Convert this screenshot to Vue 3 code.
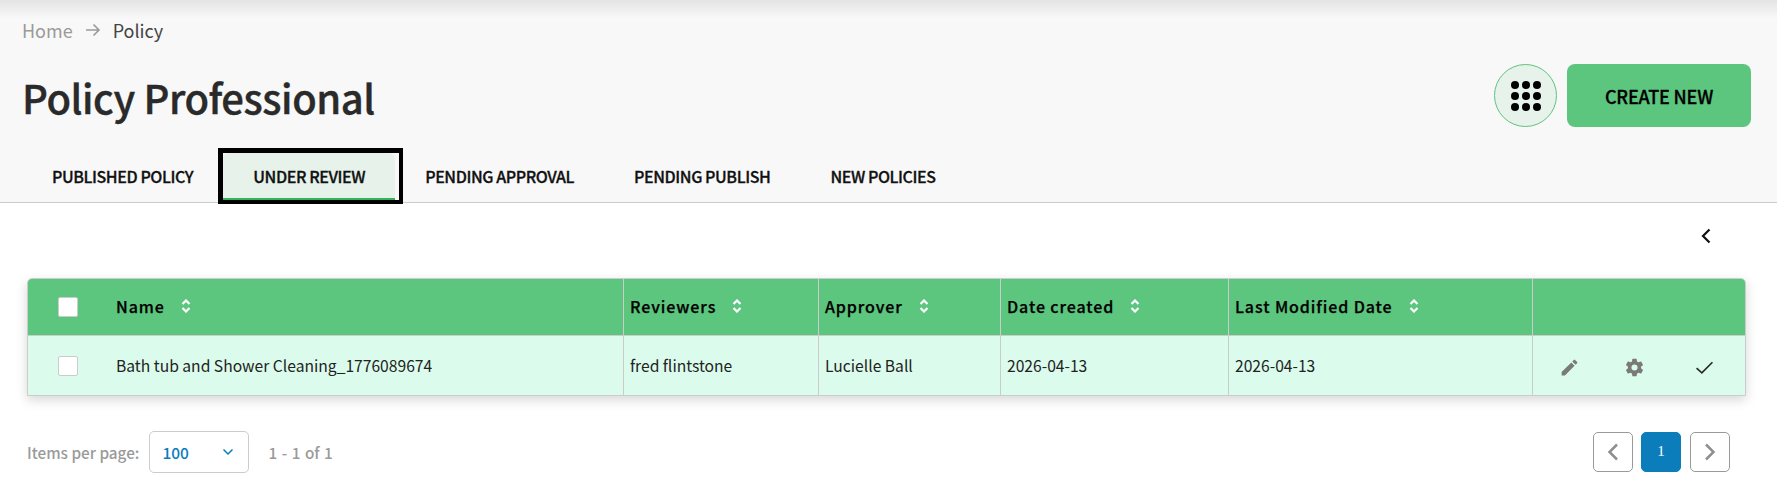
<template>
  <div class="page">
    <header class="head">
      <nav class="crumbs">
        <span class="home">Home</span>
        <svg class="arrow" width="18" height="14" viewBox="0 0 18 14"><path d="M2 7h13M9.500 1.500 15 7l-5.500 5.500" fill="none" stroke="#9a9a9a" stroke-width="1.600"/></svg>
        <span class="cur">Policy</span>
      </nav>
      <div class="title-row">
        <h1>Policy Professional</h1>
        <div class="actions">
          <button class="grid-btn" aria-label="Apps">
            <svg width="30" height="30" viewBox="0 0 30 30"><circle v-for="d in dots" :key="d.k" :cx="d.x" :cy="d.y" r="4" fill="#000"/></svg>
          </button>
          <button class="create">CREATE NEW</button>
        </div>
      </div>
      <div class="tabs">
        <div v-for="t in tabs" :key="t" class="tab" :class="{ active: t === 'UNDER REVIEW' }"><span class="tab-in">{{ t }}</span></div>
      </div>
    </header>

    <div class="collapse-row">
      <svg width="14" height="18" viewBox="0 0 14 18"><path d="M10.500 2.500 4 9l6.500 6.500" fill="none" stroke="#111" stroke-width="2.200"/></svg>
    </div>

    <div class="table">
      <div class="tr th">
        <div class="c c0"><span class="check"></span></div>
        <div v-for="c in cols" :key="c.l" class="c" :class="c.cls">
          <span>{{ c.l }}</span>
          <svg class="sort" width="10" height="14" viewBox="0 0 10 14"><path d="M1.500 5 5 1.500 8.500 5M1.500 9 5 12.500 8.500 9" fill="none" stroke="#fff" stroke-width="2.200"/></svg>
        </div>
        <div class="c c6"></div>
      </div>
      <div class="tr td">
        <div class="c c0"><span class="check"></span></div>
        <div class="c c1"><span class="cell">Bath tub and Shower Cleaning_1776089674</span></div>
        <div class="c c2"><span class="cell">fred flintstone</span></div>
        <div class="c c3"><span class="cell">Lucielle Ball</span></div>
        <div class="c c4"><span class="cell">2026-04-13</span></div>
        <div class="c c5"><span class="cell">2026-04-13</span></div>
        <div class="c c6 icons">
          <svg width="21" height="21" viewBox="0 0 24 24"><path fill="#7a7a7a" d="M3 17.250V21h3.750L17.810 9.940l-3.750-3.750L3 17.250zM20.710 7.040a1 1 0 0 0 0-1.410l-2.340-2.340a1 1 0 0 0-1.410 0l-1.830 1.830 3.750 3.750 1.830-1.830z"/></svg>
          <svg class="gear" width="21" height="21" viewBox="0 0 24 24"><path fill="#7a7a7a" d="M19.430 12.980c.04-.32.07-.64.07-.98s-.03-.66-.07-.98l2.110-1.650a.5.500 0 0 0 .12-.64l-2-3.460a.5.500 0 0 0-.61-.22l-2.490 1a7.300 7.300 0 0 0-1.690-.98l-.38-2.650A.49.490 0 0 0 14 2h-4a.49.490 0 0 0-.49.420l-.38 2.650c-.61.250-1.170.59-1.690.98l-2.490-1a.49.490 0 0 0-.61.220l-2 3.460a.49.490 0 0 0 .12.640l2.110 1.650c-.04.320-.07.650-.07.980s.03.660.07.980l-2.110 1.650a.5.500 0 0 0-.12.640l2 3.460c.12.220.39.300.61.220l2.490-1c.52.400 1.080.73 1.690.98l.38 2.650c.03.240.24.420.49.420h4c.25 0 .46-.18.49-.42l.38-2.650c.61-.25 1.170-.59 1.690-.98l2.490 1c.23.090.49 0 .61-.22l2-3.460a.5.500 0 0 0-.12-.64l-2.110-1.650zM12 15.500a3.500 3.500 0 1 1 0-7 3.500 3.500 0 0 1 0 7z"/></svg>
          <svg class="tick" width="19" height="19" viewBox="0 0 18 18"><path d="M1.500 9.500 6.500 14 16.500 4" fill="none" stroke="#2b2b2b" stroke-width="1.600"/></svg>
        </div>
      </div>
    </div>

    <div class="pager">
      <div class="left">
        <span class="muted">Items per page:</span>
        <div class="select">
          <span>100</span>
          <svg width="12" height="8" viewBox="0 0 12 8"><path d="M1.500 1.500 6 6l4.500-4.500" fill="none" stroke="#0b7dbb" stroke-width="1.500"/></svg>
        </div>
        <span class="muted count">1 - 1 of 1</span>
      </div>
      <div class="right">
        <button class="pg" aria-label="Previous"><svg width="14" height="20" viewBox="0 0 14 20"><path d="M11 2.500 3.500 10l7.500 7.500" fill="none" stroke="#8f8f8f" stroke-width="2.500"/></svg></button>
        <button class="pg on">1</button>
        <button class="pg" aria-label="Next"><svg width="14" height="20" viewBox="0 0 14 20"><path d="M3 2.500 10.500 10 3 17.500" fill="none" stroke="#8f8f8f" stroke-width="2.500"/></svg></button>
      </div>
    </div>
  </div>
</template>

<script setup>
const tabs = ['PUBLISHED POLICY', 'UNDER REVIEW', 'PENDING APPROVAL', 'PENDING PUBLISH', 'NEW POLICIES']
const cols = [
  { l: 'Name', cls: 'c1' },
  { l: 'Reviewers', cls: 'c2' },
  { l: 'Approver', cls: 'c3' },
  { l: 'Date created', cls: 'c4' },
  { l: 'Last Modified Date', cls: 'c5' }
]
const dots = []
for (const y of [4, 15, 26]) for (const x of [4, 15, 26]) dots.push({ k: x + '-' + y, x, y })
</script>

<style>
html, body { margin: 0; background: #fff; }
</style>

<style scoped>
.page {
  width: 1777px;
  height: 487px;
  overflow: hidden;
  position: relative;
  font-family: "Noto Sans CJK SC", "Noto Sans", sans-serif;
  color: #222;
  background: #fff;
}
.head {
  height: 203px;
  box-sizing: border-box;
  border-bottom: 1px solid #ccc;
  background: linear-gradient(#e4e4e4 0, #f8f8f8 18px);
  padding: 18px 0 0 22px;
}
.crumbs { display: flex; align-items: center; gap: 10px; height: 24px; font-size: 18px; line-height: 24px; }
.arrow { margin: 0 1px; }
.home { color: #9a9a9a; }
.cur { color: #444; }
.title-row { display: flex; justify-content: space-between; align-items: flex-start; padding-right: 26px; margin-top: 22px; height: 63px; }
h1 { margin: 5px 0 0; font-size: 40px; font-weight: 500; line-height: 56px; color: #2a2a2a; letter-spacing: -0.45px; -webkit-text-stroke: 0.4px #2a2a2a; }
.actions { display: flex; gap: 10px; }
.grid-btn {
  width: 63px; height: 63px; border-radius: 50%; box-sizing: border-box; border: 1px solid #5cc57e;
  background: #e6f2ea; display: flex; align-items: center; justify-content: center; padding: 0;
}
.create {
  width: 184px; height: 63px; border: 0; border-radius: 8px; background: #5cc57e;
  font: 500 18px "Noto Sans CJK SC", sans-serif; color: #000; letter-spacing: -0.2px; -webkit-text-stroke: 0.3px #000;
}
.tabs { display: flex; margin-top: 21px; height: 56px; position: relative; }
.tab {
  display: flex; align-items: center; justify-content: center; height: 58px; margin-top: -1px; box-sizing: border-box;
  font-size: 16px; font-weight: 500; color: #111; padding: 0 30px; letter-spacing: -0.42px; -webkit-text-stroke: 0.3px #111;
}
.tab-in { display: flex; align-items: center; justify-content: center; }
.tab.active {
  border: solid #000; border-width: 5px 4px 4px 5px; width: 185px; padding: 0; flex: none;
  margin-left: -5px; margin-right: -8px; height: 56px; margin-top: 0; background: #f8f8f8;
}
.active .tab-in { width: 172px; height: 47px; margin-right: 4px; background: #e6f2ea; border-bottom: 2px solid #2fb55a; border-radius: 6px 6px 0 0; box-sizing: border-box; }
.collapse-row { display: flex; justify-content: flex-end; padding: 24px 64px 0 0; height: 51px; box-sizing: border-box; }
.table {
  margin: 24px 31px 0 27px;
  border: 1px solid #ccc;
  border-radius: 5px 5px 0 0;
  box-shadow: 0 4px 12px rgba(0,0,0,.16);
  overflow: hidden;
}
.tr { display: flex; }
.th { background: #5cc57e; height: 56px; border-bottom: 1px solid #ccc; font-weight: 500; font-size: 16px; letter-spacing: 0.9px; color: #000; -webkit-text-stroke: 0.25px #000; }
.th .c > span:first-child { margin-top: -2px; }
.td { background: #dbfcec; height: 59px; font-size: 15.65px; color: #222; }
.cell { margin-top: 0; }
.c { display: flex; align-items: center; box-sizing: border-box; padding-left: 6px; border-right: 1px solid #ccc; }
.c0 { width: 88px; padding-left: 30px; border-right: 0; }
.c1 { width: 508px; padding-left: 0; }
.c2 { width: 195px; }
.c3 { width: 182px; }
.c4 { width: 228px; }
.c5 { width: 304px; }
.c6 { flex: 1; border-right: 0; }
.sort { margin-left: 16px; margin-top: -2px; }
.check { width: 20px; height: 20px; box-sizing: border-box; background: #fff; border: 1px solid #ccc; border-radius: 2px; }
.th .check { margin-top: 0 !important; }
.icons { padding: 3px 0 0 25.5px; }
.gear { margin-left: 44.5px; }
.tick { margin-left: 49.5px; }
.pager { display: flex; justify-content: space-between; align-items: center; margin: 35px 47px 0 27px; height: 41px; }
.left { display: flex; align-items: center; }
.muted { color: #9a9a9a; font-size: 15.3px; font-weight: 500; }
.select {
  width: 100px; height: 42px; box-sizing: border-box; margin-left: 10px; border: 1px solid #ccc; border-radius: 5px;
  display: flex; align-items: center; justify-content: space-between; padding: 0 14px 0 12px;
  color: #0b7dbb; font-weight: 500; font-size: 15.5px;
}
.count { margin-left: 19px; word-spacing: 1.1px; }
.right { display: flex; gap: 8px; }
.pg {
  width: 40px; height: 40px; box-sizing: border-box; border: 1px solid #9a9a9a; border-radius: 5px; background: #fff;
  display: flex; align-items: center; justify-content: center; padding: 0;
}
.pg.on { background: #0b7dbb; border-color: #0b7dbb; color: #fff; font: 15px "Liberation Serif", serif; margin-right: 1px; }
</style>
